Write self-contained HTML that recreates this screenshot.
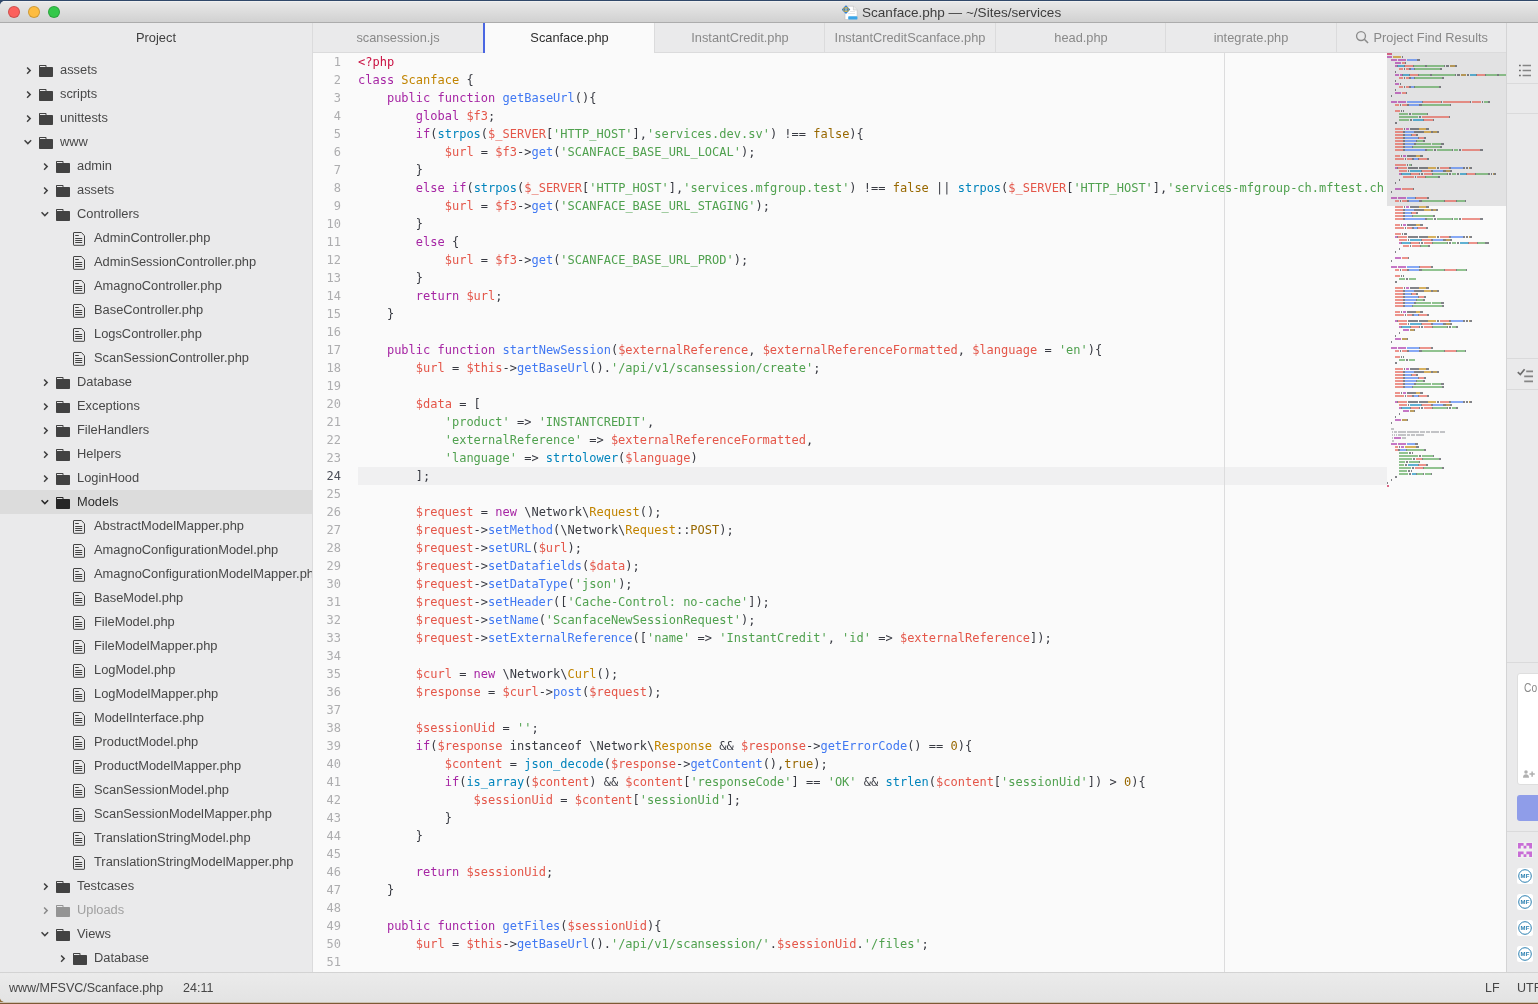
<!DOCTYPE html>
<html lang="en"><head><meta charset="utf-8"><title>Scanface.php — ~/Sites/services</title>
<style>
*{box-sizing:border-box}
html,body{margin:0;padding:0}
body{width:1538px;height:1004px;overflow:hidden;position:relative;background:linear-gradient(#30486a 0,#30486a 500px,#94703f 500px);font-family:"Liberation Sans",Arial,sans-serif;font-size:12.85px;color:#454545;-webkit-font-smoothing:antialiased}
.win{will-change:transform;position:absolute;left:0;top:1px;width:1580px;height:1001px;border-radius:5px;overflow:hidden;background:#eaeaeb}
.abs{position:absolute}
/* title bar */
.tb{left:0;top:0;width:100%;height:22px;background:linear-gradient(#f4f4f4 0,#e7e7e7 1.5px,#d1d1d1 100%);border-bottom:1px solid #acacac}
.tl{position:absolute;top:5px;width:12px;height:12px;border-radius:50%;border:.5px solid rgba(0,0,0,.18)}
.ttl{position:absolute;left:862px;top:1px;height:21px;line-height:22px;font-size:13.55px;color:#3d3d3d;white-space:nowrap;letter-spacing:0}
/* sidebar */
.side{left:0;top:22px;width:313px;height:949px;background:#eaeaeb;border-right:1px solid #dbdbdc;overflow:hidden}
.side .hd{position:absolute;left:0;top:0;width:312px;height:30px;line-height:30px;text-align:center;color:#3f3f3f}
.row{position:absolute;left:0;width:312px;height:24px}
.row.sel{background:#dcdcdc}
.row .nm{position:absolute;top:0;line-height:24px;white-space:nowrap;color:#484848}
.row.sel .nm{color:#2c2c2c}
.row svg{position:absolute;color:#424242}
.row.sel svg{color:#262626}
.row.ign .nm{color:#a0a0a0}.row.ign svg{color:#949494}
.row.ign .chev{color:#8a8a8a}
.chev{top:7px}.ico{top:6px;margin-left:1px}.fico{top:5px}
/* tabs */
.tabs{left:313px;top:22px;width:1193px;height:30px;background:#eaeaeb;border-bottom:1px solid #dbdbdc}
.tab{position:absolute;top:0;height:30px;line-height:30px;font-size:12.8px;text-align:center;color:#898989;border-left:1px solid #dbdbdc;white-space:nowrap;overflow:hidden}
.tab.act{background:#fafafa;color:#2f2f2f;height:30px;border-left:2px solid #4a66e2}
/* editor */
.ed{left:313px;top:52px;width:1193px;height:919px;background:#fafafa;overflow:hidden;font-family:"DejaVu Sans Mono","Liberation Mono",monospace;font-size:12px;line-height:18px;color:#383a42}
.gut{position:absolute;left:0;top:0;width:28px;text-align:right;color:#adadaf}
.ln.cur{color:#4b4e58}
.code{position:absolute;left:45px;top:0;width:1029px;overflow:hidden}
.cl{height:18px;width:1100px;white-space:pre}
.cl.cur{background:#f0f0f1}
.kw{color:#a626a4}.cls{color:#c18401}.fn{color:#4078f2}.bi{color:#0184bc}.var{color:#e45649}.str{color:#50a14f}.con{color:#986801}.tag{color:#ca1243}.com{color:#a0a1a7;font-style:italic}
.wrap{position:absolute;left:911px;top:0;width:1px;height:919px;background:#dcdcdd}
.mmwrap{position:absolute;left:1074px;top:0;width:119px;height:919px;background:#fafafa;overflow:hidden}
.mmvis{position:absolute;left:0;top:0;width:119px;height:153px;background:#e2e2e3}
.mm{position:absolute;left:0;top:-1px}
/* right dock */
.dock{left:1506px;top:22px;width:80px;height:949px;background:#eaeaeb;border-left:1px solid #d4d4d5}
.dv{position:absolute;left:0;width:80px;height:1px;background:#dadadb}
/* status */
.sb{left:0;top:971px;width:100%;height:30px;background:linear-gradient(#ebebeb,#e3e3e3);border-top:1px solid #d3d3d3;line-height:29px;color:#464646;font-size:12.5px}
.sb span{position:absolute;top:1px;white-space:nowrap}
</style></head>
<body>
<div class="abs" style="left:0;top:1002px;width:1538px;height:2px;background:linear-gradient(#cdc2b4 0,#cdc2b4 1px,#7d5a35 1px)"></div>
<div class="win">
 <div class="abs tb">
  <div class="tl" style="left:8px;background:#fc615d"></div>
  <div class="tl" style="left:28px;background:#fdbc40"></div>
  <div class="tl" style="left:48px;background:#34c84a"></div>
  <svg class="abs" style="left:842px;top:4px" width="16" height="15" viewBox="0 0 16 15"><path d="M3 1.2h8.4l3.8 3.8v9.6H3z" fill="#fff" stroke="#bdbdbd" stroke-width=".6"/><path d="M11.4 1.2V5h3.8" fill="#ececec" stroke="#b5b5b5" stroke-width=".5"/><path d="M8 6.5h5M6 8.5h7" stroke="#ddd" stroke-width=".7"/><rect x="6.2" y="11.2" width="9.2" height="3.3" rx=".7" fill="#3aa5e8"/><path d="M4 .3 8.3 4.6 4 8.9-.3 4.6z" fill="#2f7fd6"/><ellipse cx="4" cy="4.6" rx="2.6" ry="2.1" fill="none" stroke="#c9a43a" stroke-width="1"/><path d="M4 2.6v4" stroke="#e9d58a" stroke-width="1.1"/></svg>
  <div class="ttl">Scanface.php — ~/Sites/services</div>
 </div>
 <div class="abs side">
  <div class="hd">Project</div>
  <div class="abs" style="left:0;top:35px;width:312px">
<div class="row" style="top:0px"><svg class="chev" style="left:24px" width="10" height="10" viewBox="0 0 10 10"><path d="M3.1 2.5 6.2 5.6 3.1 8.7" fill="none" stroke="currentColor" stroke-width="1.5"/></svg><svg class="ico" style="left:38px" width="15" height="13" viewBox="0 0 15 13"><path d="M.8 1h5.9a.8.8 0 0 1 .8.8V3h5.7a.8.8 0 0 1 .8.8v8.4a.8.8 0 0 1-.8.8H.8a.8.8 0 0 1-.8-.8V1.8A.8.8 0 0 1 .8 1zM1 2v1h5.5V2z" fill="currentColor" fill-rule="evenodd"/></svg><span class="nm" style="left:60px">assets</span></div>
<div class="row" style="top:24px"><svg class="chev" style="left:24px" width="10" height="10" viewBox="0 0 10 10"><path d="M3.1 2.5 6.2 5.6 3.1 8.7" fill="none" stroke="currentColor" stroke-width="1.5"/></svg><svg class="ico" style="left:38px" width="15" height="13" viewBox="0 0 15 13"><path d="M.8 1h5.9a.8.8 0 0 1 .8.8V3h5.7a.8.8 0 0 1 .8.8v8.4a.8.8 0 0 1-.8.8H.8a.8.8 0 0 1-.8-.8V1.8A.8.8 0 0 1 .8 1zM1 2v1h5.5V2z" fill="currentColor" fill-rule="evenodd"/></svg><span class="nm" style="left:60px">scripts</span></div>
<div class="row" style="top:48px"><svg class="chev" style="left:24px" width="10" height="10" viewBox="0 0 10 10"><path d="M3.1 2.5 6.2 5.6 3.1 8.7" fill="none" stroke="currentColor" stroke-width="1.5"/></svg><svg class="ico" style="left:38px" width="15" height="13" viewBox="0 0 15 13"><path d="M.8 1h5.9a.8.8 0 0 1 .8.8V3h5.7a.8.8 0 0 1 .8.8v8.4a.8.8 0 0 1-.8.8H.8a.8.8 0 0 1-.8-.8V1.8A.8.8 0 0 1 .8 1zM1 2v1h5.5V2z" fill="currentColor" fill-rule="evenodd"/></svg><span class="nm" style="left:60px">unittests</span></div>
<div class="row" style="top:72px"><svg class="chev" style="left:24px" width="10" height="10" viewBox="0 0 10 10"><path d="M.55 3.3 3.85 6.6 7.15 3.3" fill="none" stroke="currentColor" stroke-width="1.5"/></svg><svg class="ico" style="left:38px" width="15" height="13" viewBox="0 0 15 13"><path d="M.8 1h5.9a.8.8 0 0 1 .8.8V3h5.7a.8.8 0 0 1 .8.8v8.4a.8.8 0 0 1-.8.8H.8a.8.8 0 0 1-.8-.8V1.8A.8.8 0 0 1 .8 1zM1 2v1h5.5V2z" fill="currentColor" fill-rule="evenodd"/></svg><span class="nm" style="left:60px">www</span></div>
<div class="row" style="top:96px"><svg class="chev" style="left:41px" width="10" height="10" viewBox="0 0 10 10"><path d="M3.1 2.5 6.2 5.6 3.1 8.7" fill="none" stroke="currentColor" stroke-width="1.5"/></svg><svg class="ico" style="left:55px" width="15" height="13" viewBox="0 0 15 13"><path d="M.8 1h5.9a.8.8 0 0 1 .8.8V3h5.7a.8.8 0 0 1 .8.8v8.4a.8.8 0 0 1-.8.8H.8a.8.8 0 0 1-.8-.8V1.8A.8.8 0 0 1 .8 1zM1 2v1h5.5V2z" fill="currentColor" fill-rule="evenodd"/></svg><span class="nm" style="left:77px">admin</span></div>
<div class="row" style="top:120px"><svg class="chev" style="left:41px" width="10" height="10" viewBox="0 0 10 10"><path d="M3.1 2.5 6.2 5.6 3.1 8.7" fill="none" stroke="currentColor" stroke-width="1.5"/></svg><svg class="ico" style="left:55px" width="15" height="13" viewBox="0 0 15 13"><path d="M.8 1h5.9a.8.8 0 0 1 .8.8V3h5.7a.8.8 0 0 1 .8.8v8.4a.8.8 0 0 1-.8.8H.8a.8.8 0 0 1-.8-.8V1.8A.8.8 0 0 1 .8 1zM1 2v1h5.5V2z" fill="currentColor" fill-rule="evenodd"/></svg><span class="nm" style="left:77px">assets</span></div>
<div class="row" style="top:144px"><svg class="chev" style="left:41px" width="10" height="10" viewBox="0 0 10 10"><path d="M.55 3.3 3.85 6.6 7.15 3.3" fill="none" stroke="currentColor" stroke-width="1.5"/></svg><svg class="ico" style="left:55px" width="15" height="13" viewBox="0 0 15 13"><path d="M.8 1h5.9a.8.8 0 0 1 .8.8V3h5.7a.8.8 0 0 1 .8.8v8.4a.8.8 0 0 1-.8.8H.8a.8.8 0 0 1-.8-.8V1.8A.8.8 0 0 1 .8 1zM1 2v1h5.5V2z" fill="currentColor" fill-rule="evenodd"/></svg><span class="nm" style="left:77px">Controllers</span></div>
<div class="row" style="top:168px"><svg class="fico" style="left:72px" width="14" height="16" viewBox="0 0 14 16"><path d="M2 1.5h7.3l3.2 3.2v9.1a.5.5 0 0 1-.5.5H2a.5.5 0 0 1-.5-.5V2a.5.5 0 0 1 .5-.5z" fill="none" stroke="currentColor" stroke-width="1"/><path d="M3.2 4.5h3.6M3.2 7.5h7M3.2 9.5h7M3.2 11.5h7" stroke="currentColor" stroke-width="1" fill="none"/></svg><span class="nm" style="left:94px">AdminController.php</span></div>
<div class="row" style="top:192px"><svg class="fico" style="left:72px" width="14" height="16" viewBox="0 0 14 16"><path d="M2 1.5h7.3l3.2 3.2v9.1a.5.5 0 0 1-.5.5H2a.5.5 0 0 1-.5-.5V2a.5.5 0 0 1 .5-.5z" fill="none" stroke="currentColor" stroke-width="1"/><path d="M3.2 4.5h3.6M3.2 7.5h7M3.2 9.5h7M3.2 11.5h7" stroke="currentColor" stroke-width="1" fill="none"/></svg><span class="nm" style="left:94px">AdminSessionController.php</span></div>
<div class="row" style="top:216px"><svg class="fico" style="left:72px" width="14" height="16" viewBox="0 0 14 16"><path d="M2 1.5h7.3l3.2 3.2v9.1a.5.5 0 0 1-.5.5H2a.5.5 0 0 1-.5-.5V2a.5.5 0 0 1 .5-.5z" fill="none" stroke="currentColor" stroke-width="1"/><path d="M3.2 4.5h3.6M3.2 7.5h7M3.2 9.5h7M3.2 11.5h7" stroke="currentColor" stroke-width="1" fill="none"/></svg><span class="nm" style="left:94px">AmagnoController.php</span></div>
<div class="row" style="top:240px"><svg class="fico" style="left:72px" width="14" height="16" viewBox="0 0 14 16"><path d="M2 1.5h7.3l3.2 3.2v9.1a.5.5 0 0 1-.5.5H2a.5.5 0 0 1-.5-.5V2a.5.5 0 0 1 .5-.5z" fill="none" stroke="currentColor" stroke-width="1"/><path d="M3.2 4.5h3.6M3.2 7.5h7M3.2 9.5h7M3.2 11.5h7" stroke="currentColor" stroke-width="1" fill="none"/></svg><span class="nm" style="left:94px">BaseController.php</span></div>
<div class="row" style="top:264px"><svg class="fico" style="left:72px" width="14" height="16" viewBox="0 0 14 16"><path d="M2 1.5h7.3l3.2 3.2v9.1a.5.5 0 0 1-.5.5H2a.5.5 0 0 1-.5-.5V2a.5.5 0 0 1 .5-.5z" fill="none" stroke="currentColor" stroke-width="1"/><path d="M3.2 4.5h3.6M3.2 7.5h7M3.2 9.5h7M3.2 11.5h7" stroke="currentColor" stroke-width="1" fill="none"/></svg><span class="nm" style="left:94px">LogsController.php</span></div>
<div class="row" style="top:288px"><svg class="fico" style="left:72px" width="14" height="16" viewBox="0 0 14 16"><path d="M2 1.5h7.3l3.2 3.2v9.1a.5.5 0 0 1-.5.5H2a.5.5 0 0 1-.5-.5V2a.5.5 0 0 1 .5-.5z" fill="none" stroke="currentColor" stroke-width="1"/><path d="M3.2 4.5h3.6M3.2 7.5h7M3.2 9.5h7M3.2 11.5h7" stroke="currentColor" stroke-width="1" fill="none"/></svg><span class="nm" style="left:94px">ScanSessionController.php</span></div>
<div class="row" style="top:312px"><svg class="chev" style="left:41px" width="10" height="10" viewBox="0 0 10 10"><path d="M3.1 2.5 6.2 5.6 3.1 8.7" fill="none" stroke="currentColor" stroke-width="1.5"/></svg><svg class="ico" style="left:55px" width="15" height="13" viewBox="0 0 15 13"><path d="M.8 1h5.9a.8.8 0 0 1 .8.8V3h5.7a.8.8 0 0 1 .8.8v8.4a.8.8 0 0 1-.8.8H.8a.8.8 0 0 1-.8-.8V1.8A.8.8 0 0 1 .8 1zM1 2v1h5.5V2z" fill="currentColor" fill-rule="evenodd"/></svg><span class="nm" style="left:77px">Database</span></div>
<div class="row" style="top:336px"><svg class="chev" style="left:41px" width="10" height="10" viewBox="0 0 10 10"><path d="M3.1 2.5 6.2 5.6 3.1 8.7" fill="none" stroke="currentColor" stroke-width="1.5"/></svg><svg class="ico" style="left:55px" width="15" height="13" viewBox="0 0 15 13"><path d="M.8 1h5.9a.8.8 0 0 1 .8.8V3h5.7a.8.8 0 0 1 .8.8v8.4a.8.8 0 0 1-.8.8H.8a.8.8 0 0 1-.8-.8V1.8A.8.8 0 0 1 .8 1zM1 2v1h5.5V2z" fill="currentColor" fill-rule="evenodd"/></svg><span class="nm" style="left:77px">Exceptions</span></div>
<div class="row" style="top:360px"><svg class="chev" style="left:41px" width="10" height="10" viewBox="0 0 10 10"><path d="M3.1 2.5 6.2 5.6 3.1 8.7" fill="none" stroke="currentColor" stroke-width="1.5"/></svg><svg class="ico" style="left:55px" width="15" height="13" viewBox="0 0 15 13"><path d="M.8 1h5.9a.8.8 0 0 1 .8.8V3h5.7a.8.8 0 0 1 .8.8v8.4a.8.8 0 0 1-.8.8H.8a.8.8 0 0 1-.8-.8V1.8A.8.8 0 0 1 .8 1zM1 2v1h5.5V2z" fill="currentColor" fill-rule="evenodd"/></svg><span class="nm" style="left:77px">FileHandlers</span></div>
<div class="row" style="top:384px"><svg class="chev" style="left:41px" width="10" height="10" viewBox="0 0 10 10"><path d="M3.1 2.5 6.2 5.6 3.1 8.7" fill="none" stroke="currentColor" stroke-width="1.5"/></svg><svg class="ico" style="left:55px" width="15" height="13" viewBox="0 0 15 13"><path d="M.8 1h5.9a.8.8 0 0 1 .8.8V3h5.7a.8.8 0 0 1 .8.8v8.4a.8.8 0 0 1-.8.8H.8a.8.8 0 0 1-.8-.8V1.8A.8.8 0 0 1 .8 1zM1 2v1h5.5V2z" fill="currentColor" fill-rule="evenodd"/></svg><span class="nm" style="left:77px">Helpers</span></div>
<div class="row" style="top:408px"><svg class="chev" style="left:41px" width="10" height="10" viewBox="0 0 10 10"><path d="M3.1 2.5 6.2 5.6 3.1 8.7" fill="none" stroke="currentColor" stroke-width="1.5"/></svg><svg class="ico" style="left:55px" width="15" height="13" viewBox="0 0 15 13"><path d="M.8 1h5.9a.8.8 0 0 1 .8.8V3h5.7a.8.8 0 0 1 .8.8v8.4a.8.8 0 0 1-.8.8H.8a.8.8 0 0 1-.8-.8V1.8A.8.8 0 0 1 .8 1zM1 2v1h5.5V2z" fill="currentColor" fill-rule="evenodd"/></svg><span class="nm" style="left:77px">LoginHood</span></div>
<div class="row sel" style="top:432px"><svg class="chev" style="left:41px" width="10" height="10" viewBox="0 0 10 10"><path d="M.55 3.3 3.85 6.6 7.15 3.3" fill="none" stroke="currentColor" stroke-width="1.5"/></svg><svg class="ico" style="left:55px" width="15" height="13" viewBox="0 0 15 13"><path d="M.8 1h5.9a.8.8 0 0 1 .8.8V3h5.7a.8.8 0 0 1 .8.8v8.4a.8.8 0 0 1-.8.8H.8a.8.8 0 0 1-.8-.8V1.8A.8.8 0 0 1 .8 1zM1 2v1h5.5V2z" fill="currentColor" fill-rule="evenodd"/></svg><span class="nm" style="left:77px">Models</span></div>
<div class="row" style="top:456px"><svg class="fico" style="left:72px" width="14" height="16" viewBox="0 0 14 16"><path d="M2 1.5h7.3l3.2 3.2v9.1a.5.5 0 0 1-.5.5H2a.5.5 0 0 1-.5-.5V2a.5.5 0 0 1 .5-.5z" fill="none" stroke="currentColor" stroke-width="1"/><path d="M3.2 4.5h3.6M3.2 7.5h7M3.2 9.5h7M3.2 11.5h7" stroke="currentColor" stroke-width="1" fill="none"/></svg><span class="nm" style="left:94px">AbstractModelMapper.php</span></div>
<div class="row" style="top:480px"><svg class="fico" style="left:72px" width="14" height="16" viewBox="0 0 14 16"><path d="M2 1.5h7.3l3.2 3.2v9.1a.5.5 0 0 1-.5.5H2a.5.5 0 0 1-.5-.5V2a.5.5 0 0 1 .5-.5z" fill="none" stroke="currentColor" stroke-width="1"/><path d="M3.2 4.5h3.6M3.2 7.5h7M3.2 9.5h7M3.2 11.5h7" stroke="currentColor" stroke-width="1" fill="none"/></svg><span class="nm" style="left:94px">AmagnoConfigurationModel.php</span></div>
<div class="row" style="top:504px"><svg class="fico" style="left:72px" width="14" height="16" viewBox="0 0 14 16"><path d="M2 1.5h7.3l3.2 3.2v9.1a.5.5 0 0 1-.5.5H2a.5.5 0 0 1-.5-.5V2a.5.5 0 0 1 .5-.5z" fill="none" stroke="currentColor" stroke-width="1"/><path d="M3.2 4.5h3.6M3.2 7.5h7M3.2 9.5h7M3.2 11.5h7" stroke="currentColor" stroke-width="1" fill="none"/></svg><span class="nm" style="left:94px">AmagnoConfigurationModelMapper.php</span></div>
<div class="row" style="top:528px"><svg class="fico" style="left:72px" width="14" height="16" viewBox="0 0 14 16"><path d="M2 1.5h7.3l3.2 3.2v9.1a.5.5 0 0 1-.5.5H2a.5.5 0 0 1-.5-.5V2a.5.5 0 0 1 .5-.5z" fill="none" stroke="currentColor" stroke-width="1"/><path d="M3.2 4.5h3.6M3.2 7.5h7M3.2 9.5h7M3.2 11.5h7" stroke="currentColor" stroke-width="1" fill="none"/></svg><span class="nm" style="left:94px">BaseModel.php</span></div>
<div class="row" style="top:552px"><svg class="fico" style="left:72px" width="14" height="16" viewBox="0 0 14 16"><path d="M2 1.5h7.3l3.2 3.2v9.1a.5.5 0 0 1-.5.5H2a.5.5 0 0 1-.5-.5V2a.5.5 0 0 1 .5-.5z" fill="none" stroke="currentColor" stroke-width="1"/><path d="M3.2 4.5h3.6M3.2 7.5h7M3.2 9.5h7M3.2 11.5h7" stroke="currentColor" stroke-width="1" fill="none"/></svg><span class="nm" style="left:94px">FileModel.php</span></div>
<div class="row" style="top:576px"><svg class="fico" style="left:72px" width="14" height="16" viewBox="0 0 14 16"><path d="M2 1.5h7.3l3.2 3.2v9.1a.5.5 0 0 1-.5.5H2a.5.5 0 0 1-.5-.5V2a.5.5 0 0 1 .5-.5z" fill="none" stroke="currentColor" stroke-width="1"/><path d="M3.2 4.5h3.6M3.2 7.5h7M3.2 9.5h7M3.2 11.5h7" stroke="currentColor" stroke-width="1" fill="none"/></svg><span class="nm" style="left:94px">FileModelMapper.php</span></div>
<div class="row" style="top:600px"><svg class="fico" style="left:72px" width="14" height="16" viewBox="0 0 14 16"><path d="M2 1.5h7.3l3.2 3.2v9.1a.5.5 0 0 1-.5.5H2a.5.5 0 0 1-.5-.5V2a.5.5 0 0 1 .5-.5z" fill="none" stroke="currentColor" stroke-width="1"/><path d="M3.2 4.5h3.6M3.2 7.5h7M3.2 9.5h7M3.2 11.5h7" stroke="currentColor" stroke-width="1" fill="none"/></svg><span class="nm" style="left:94px">LogModel.php</span></div>
<div class="row" style="top:624px"><svg class="fico" style="left:72px" width="14" height="16" viewBox="0 0 14 16"><path d="M2 1.5h7.3l3.2 3.2v9.1a.5.5 0 0 1-.5.5H2a.5.5 0 0 1-.5-.5V2a.5.5 0 0 1 .5-.5z" fill="none" stroke="currentColor" stroke-width="1"/><path d="M3.2 4.5h3.6M3.2 7.5h7M3.2 9.5h7M3.2 11.5h7" stroke="currentColor" stroke-width="1" fill="none"/></svg><span class="nm" style="left:94px">LogModelMapper.php</span></div>
<div class="row" style="top:648px"><svg class="fico" style="left:72px" width="14" height="16" viewBox="0 0 14 16"><path d="M2 1.5h7.3l3.2 3.2v9.1a.5.5 0 0 1-.5.5H2a.5.5 0 0 1-.5-.5V2a.5.5 0 0 1 .5-.5z" fill="none" stroke="currentColor" stroke-width="1"/><path d="M3.2 4.5h3.6M3.2 7.5h7M3.2 9.5h7M3.2 11.5h7" stroke="currentColor" stroke-width="1" fill="none"/></svg><span class="nm" style="left:94px">ModelInterface.php</span></div>
<div class="row" style="top:672px"><svg class="fico" style="left:72px" width="14" height="16" viewBox="0 0 14 16"><path d="M2 1.5h7.3l3.2 3.2v9.1a.5.5 0 0 1-.5.5H2a.5.5 0 0 1-.5-.5V2a.5.5 0 0 1 .5-.5z" fill="none" stroke="currentColor" stroke-width="1"/><path d="M3.2 4.5h3.6M3.2 7.5h7M3.2 9.5h7M3.2 11.5h7" stroke="currentColor" stroke-width="1" fill="none"/></svg><span class="nm" style="left:94px">ProductModel.php</span></div>
<div class="row" style="top:696px"><svg class="fico" style="left:72px" width="14" height="16" viewBox="0 0 14 16"><path d="M2 1.5h7.3l3.2 3.2v9.1a.5.5 0 0 1-.5.5H2a.5.5 0 0 1-.5-.5V2a.5.5 0 0 1 .5-.5z" fill="none" stroke="currentColor" stroke-width="1"/><path d="M3.2 4.5h3.6M3.2 7.5h7M3.2 9.5h7M3.2 11.5h7" stroke="currentColor" stroke-width="1" fill="none"/></svg><span class="nm" style="left:94px">ProductModelMapper.php</span></div>
<div class="row" style="top:720px"><svg class="fico" style="left:72px" width="14" height="16" viewBox="0 0 14 16"><path d="M2 1.5h7.3l3.2 3.2v9.1a.5.5 0 0 1-.5.5H2a.5.5 0 0 1-.5-.5V2a.5.5 0 0 1 .5-.5z" fill="none" stroke="currentColor" stroke-width="1"/><path d="M3.2 4.5h3.6M3.2 7.5h7M3.2 9.5h7M3.2 11.5h7" stroke="currentColor" stroke-width="1" fill="none"/></svg><span class="nm" style="left:94px">ScanSessionModel.php</span></div>
<div class="row" style="top:744px"><svg class="fico" style="left:72px" width="14" height="16" viewBox="0 0 14 16"><path d="M2 1.5h7.3l3.2 3.2v9.1a.5.5 0 0 1-.5.5H2a.5.5 0 0 1-.5-.5V2a.5.5 0 0 1 .5-.5z" fill="none" stroke="currentColor" stroke-width="1"/><path d="M3.2 4.5h3.6M3.2 7.5h7M3.2 9.5h7M3.2 11.5h7" stroke="currentColor" stroke-width="1" fill="none"/></svg><span class="nm" style="left:94px">ScanSessionModelMapper.php</span></div>
<div class="row" style="top:768px"><svg class="fico" style="left:72px" width="14" height="16" viewBox="0 0 14 16"><path d="M2 1.5h7.3l3.2 3.2v9.1a.5.5 0 0 1-.5.5H2a.5.5 0 0 1-.5-.5V2a.5.5 0 0 1 .5-.5z" fill="none" stroke="currentColor" stroke-width="1"/><path d="M3.2 4.5h3.6M3.2 7.5h7M3.2 9.5h7M3.2 11.5h7" stroke="currentColor" stroke-width="1" fill="none"/></svg><span class="nm" style="left:94px">TranslationStringModel.php</span></div>
<div class="row" style="top:792px"><svg class="fico" style="left:72px" width="14" height="16" viewBox="0 0 14 16"><path d="M2 1.5h7.3l3.2 3.2v9.1a.5.5 0 0 1-.5.5H2a.5.5 0 0 1-.5-.5V2a.5.5 0 0 1 .5-.5z" fill="none" stroke="currentColor" stroke-width="1"/><path d="M3.2 4.5h3.6M3.2 7.5h7M3.2 9.5h7M3.2 11.5h7" stroke="currentColor" stroke-width="1" fill="none"/></svg><span class="nm" style="left:94px">TranslationStringModelMapper.php</span></div>
<div class="row" style="top:816px"><svg class="chev" style="left:41px" width="10" height="10" viewBox="0 0 10 10"><path d="M3.1 2.5 6.2 5.6 3.1 8.7" fill="none" stroke="currentColor" stroke-width="1.5"/></svg><svg class="ico" style="left:55px" width="15" height="13" viewBox="0 0 15 13"><path d="M.8 1h5.9a.8.8 0 0 1 .8.8V3h5.7a.8.8 0 0 1 .8.8v8.4a.8.8 0 0 1-.8.8H.8a.8.8 0 0 1-.8-.8V1.8A.8.8 0 0 1 .8 1zM1 2v1h5.5V2z" fill="currentColor" fill-rule="evenodd"/></svg><span class="nm" style="left:77px">Testcases</span></div>
<div class="row ign" style="top:840px"><svg class="chev" style="left:41px" width="10" height="10" viewBox="0 0 10 10"><path d="M3.1 2.5 6.2 5.6 3.1 8.7" fill="none" stroke="currentColor" stroke-width="1.5"/></svg><svg class="ico" style="left:55px" width="15" height="13" viewBox="0 0 15 13"><path d="M.8 1h5.9a.8.8 0 0 1 .8.8V3h5.7a.8.8 0 0 1 .8.8v8.4a.8.8 0 0 1-.8.8H.8a.8.8 0 0 1-.8-.8V1.8A.8.8 0 0 1 .8 1zM1 2v1h5.5V2z" fill="currentColor" fill-rule="evenodd"/></svg><span class="nm" style="left:77px">Uploads</span></div>
<div class="row" style="top:864px"><svg class="chev" style="left:41px" width="10" height="10" viewBox="0 0 10 10"><path d="M.55 3.3 3.85 6.6 7.15 3.3" fill="none" stroke="currentColor" stroke-width="1.5"/></svg><svg class="ico" style="left:55px" width="15" height="13" viewBox="0 0 15 13"><path d="M.8 1h5.9a.8.8 0 0 1 .8.8V3h5.7a.8.8 0 0 1 .8.8v8.4a.8.8 0 0 1-.8.8H.8a.8.8 0 0 1-.8-.8V1.8A.8.8 0 0 1 .8 1zM1 2v1h5.5V2z" fill="currentColor" fill-rule="evenodd"/></svg><span class="nm" style="left:77px">Views</span></div>
<div class="row" style="top:888px"><svg class="chev" style="left:58px" width="10" height="10" viewBox="0 0 10 10"><path d="M3.1 2.5 6.2 5.6 3.1 8.7" fill="none" stroke="currentColor" stroke-width="1.5"/></svg><svg class="ico" style="left:72px" width="15" height="13" viewBox="0 0 15 13"><path d="M.8 1h5.9a.8.8 0 0 1 .8.8V3h5.7a.8.8 0 0 1 .8.8v8.4a.8.8 0 0 1-.8.8H.8a.8.8 0 0 1-.8-.8V1.8A.8.8 0 0 1 .8 1zM1 2v1h5.5V2z" fill="currentColor" fill-rule="evenodd"/></svg><span class="nm" style="left:94px">Database</span></div>
  </div>
 </div>
 <div class="abs tabs">
  <div class="tab" style="left:0;width:170px;border-left:0">scansession.js</div>
  <div class="tab act" style="left:170px;width:171px">Scanface.php</div>
  <div class="tab" style="left:341px;width:171px">InstantCredit.php</div>
  <div class="tab" style="left:511px;width:171px">InstantCreditScanface.php</div>
  <div class="tab" style="left:682px;width:171px">head.php</div>
  <div class="tab" style="left:852px;width:171px">integrate.php</div>
  <div class="tab" style="left:1023px;width:170px"><svg width="14.5" height="14.5" viewBox="0 0 14 14" style="vertical-align:-2.5px;margin-right:4px"><circle cx="5.8" cy="5.8" r="4.3" fill="none" stroke="#8c8c8c" stroke-width="1.3"/><path d="M9 9l3.6 3.6" stroke="#8c8c8c" stroke-width="1.5"/></svg>Project Find Results</div>
 </div>
 <div class="abs ed">
  <div class="gut">
<div class="ln">1</div>
<div class="ln">2</div>
<div class="ln">3</div>
<div class="ln">4</div>
<div class="ln">5</div>
<div class="ln">6</div>
<div class="ln">7</div>
<div class="ln">8</div>
<div class="ln">9</div>
<div class="ln">10</div>
<div class="ln">11</div>
<div class="ln">12</div>
<div class="ln">13</div>
<div class="ln">14</div>
<div class="ln">15</div>
<div class="ln">16</div>
<div class="ln">17</div>
<div class="ln">18</div>
<div class="ln">19</div>
<div class="ln">20</div>
<div class="ln">21</div>
<div class="ln">22</div>
<div class="ln">23</div>
<div class="ln cur">24</div>
<div class="ln">25</div>
<div class="ln">26</div>
<div class="ln">27</div>
<div class="ln">28</div>
<div class="ln">29</div>
<div class="ln">30</div>
<div class="ln">31</div>
<div class="ln">32</div>
<div class="ln">33</div>
<div class="ln">34</div>
<div class="ln">35</div>
<div class="ln">36</div>
<div class="ln">37</div>
<div class="ln">38</div>
<div class="ln">39</div>
<div class="ln">40</div>
<div class="ln">41</div>
<div class="ln">42</div>
<div class="ln">43</div>
<div class="ln">44</div>
<div class="ln">45</div>
<div class="ln">46</div>
<div class="ln">47</div>
<div class="ln">48</div>
<div class="ln">49</div>
<div class="ln">50</div>
<div class="ln">51</div>
  </div>
  <div class="code">
<div class="cl"><span class="tag">&lt;?php</span></div>
<div class="cl"><span class="kw">class</span> <span class="cls">Scanface</span> {</div>
<div class="cl">    <span class="kw">public</span> <span class="kw">function</span> <span class="fn">getBaseUrl</span>(){</div>
<div class="cl">        <span class="kw">global</span> <span class="var">$f3</span>;</div>
<div class="cl">        <span class="kw">if</span>(<span class="bi">strpos</span>(<span class="var">$_SERVER</span>[<span class="str">'HTTP_HOST'</span>],<span class="str">'services.dev.sv'</span>) !== <span class="con">false</span>){</div>
<div class="cl">            <span class="var">$url</span> = <span class="var">$f3</span>-&gt;<span class="fn">get</span>(<span class="str">'SCANFACE_BASE_URL_LOCAL'</span>);</div>
<div class="cl">        }</div>
<div class="cl">        <span class="kw">else</span> <span class="kw">if</span>(<span class="bi">strpos</span>(<span class="var">$_SERVER</span>[<span class="str">'HTTP_HOST'</span>],<span class="str">'services.mfgroup.test'</span>) !== <span class="con">false</span> || <span class="bi">strpos</span>(<span class="var">$_SERVER</span>[<span class="str">'HTTP_HOST'</span>],<span class="str">'services-mfgroup-ch.mftest.ch'</span>) !== <span class="con">false</span>){</div>
<div class="cl">            <span class="var">$url</span> = <span class="var">$f3</span>-&gt;<span class="fn">get</span>(<span class="str">'SCANFACE_BASE_URL_STAGING'</span>);</div>
<div class="cl">        }</div>
<div class="cl">        <span class="kw">else</span> {</div>
<div class="cl">            <span class="var">$url</span> = <span class="var">$f3</span>-&gt;<span class="fn">get</span>(<span class="str">'SCANFACE_BASE_URL_PROD'</span>);</div>
<div class="cl">        }</div>
<div class="cl">        <span class="kw">return</span> <span class="var">$url</span>;</div>
<div class="cl">    }</div>
<div class="cl">&nbsp;</div>
<div class="cl">    <span class="kw">public</span> <span class="kw">function</span> <span class="fn">startNewSession</span>(<span class="var">$externalReference</span>, <span class="var">$externalReferenceFormatted</span>, <span class="var">$language</span> = <span class="str">'en'</span>){</div>
<div class="cl">        <span class="var">$url</span> = <span class="var">$this</span>-&gt;<span class="fn">getBaseUrl</span>().<span class="str">'/api/v1/scansession/create'</span>;</div>
<div class="cl">&nbsp;</div>
<div class="cl">        <span class="var">$data</span> = [</div>
<div class="cl">            <span class="str">'product'</span> =&gt; <span class="str">'INSTANTCREDIT'</span>,</div>
<div class="cl">            <span class="str">'externalReference'</span> =&gt; <span class="var">$externalReferenceFormatted</span>,</div>
<div class="cl">            <span class="str">'language'</span> =&gt; <span class="bi">strtolower</span>(<span class="var">$language</span>)</div>
<div class="cl cur">        ];</div>
<div class="cl">&nbsp;</div>
<div class="cl">        <span class="var">$request</span> = <span class="kw">new</span> \Network\<span class="cls">Request</span>();</div>
<div class="cl">        <span class="var">$request</span>-&gt;<span class="fn">setMethod</span>(\Network\<span class="cls">Request</span>::<span class="con">POST</span>);</div>
<div class="cl">        <span class="var">$request</span>-&gt;<span class="fn">setURL</span>(<span class="var">$url</span>);</div>
<div class="cl">        <span class="var">$request</span>-&gt;<span class="fn">setDatafields</span>(<span class="var">$data</span>);</div>
<div class="cl">        <span class="var">$request</span>-&gt;<span class="fn">setDataType</span>(<span class="str">'json'</span>);</div>
<div class="cl">        <span class="var">$request</span>-&gt;<span class="fn">setHeader</span>([<span class="str">'Cache-Control: no-cache'</span>]);</div>
<div class="cl">        <span class="var">$request</span>-&gt;<span class="fn">setName</span>(<span class="str">'ScanfaceNewSessionRequest'</span>);</div>
<div class="cl">        <span class="var">$request</span>-&gt;<span class="fn">setExternalReference</span>([<span class="str">'name'</span> =&gt; <span class="str">'InstantCredit'</span>, <span class="str">'id'</span> =&gt; <span class="var">$externalReference</span>]);</div>
<div class="cl">&nbsp;</div>
<div class="cl">        <span class="var">$curl</span> = <span class="kw">new</span> \Network\<span class="cls">Curl</span>();</div>
<div class="cl">        <span class="var">$response</span> = <span class="var">$curl</span>-&gt;<span class="fn">post</span>(<span class="var">$request</span>);</div>
<div class="cl">&nbsp;</div>
<div class="cl">        <span class="var">$sessionUid</span> = <span class="str">''</span>;</div>
<div class="cl">        <span class="kw">if</span>(<span class="var">$response</span> instanceof \Network\<span class="cls">Response</span> &amp;&amp; <span class="var">$response</span>-&gt;<span class="fn">getErrorCode</span>() == <span class="con">0</span>){</div>
<div class="cl">            <span class="var">$content</span> = <span class="bi">json_decode</span>(<span class="var">$response</span>-&gt;<span class="fn">getContent</span>(),<span class="con">true</span>);</div>
<div class="cl">            <span class="kw">if</span>(<span class="bi">is_array</span>(<span class="var">$content</span>) &amp;&amp; <span class="var">$content</span>[<span class="str">'responseCode'</span>] == <span class="str">'OK'</span> &amp;&amp; <span class="bi">strlen</span>(<span class="var">$content</span>[<span class="str">'sessionUid'</span>]) &gt; <span class="con">0</span>){</div>
<div class="cl">                <span class="var">$sessionUid</span> = <span class="var">$content</span>[<span class="str">'sessionUid'</span>];</div>
<div class="cl">            }</div>
<div class="cl">        }</div>
<div class="cl">&nbsp;</div>
<div class="cl">        <span class="kw">return</span> <span class="var">$sessionUid</span>;</div>
<div class="cl">    }</div>
<div class="cl">&nbsp;</div>
<div class="cl">    <span class="kw">public</span> <span class="kw">function</span> <span class="fn">getFiles</span>(<span class="var">$sessionUid</span>){</div>
<div class="cl">        <span class="var">$url</span> = <span class="var">$this</span>-&gt;<span class="fn">getBaseUrl</span>().<span class="str">'/api/v1/scansession/'</span>.<span class="var">$sessionUid</span>.<span class="str">'/files'</span>;</div>
<div class="cl">&nbsp;</div>
  </div>
  <div class="wrap"></div>
  <div class="mmwrap"><div class="mmvis"></div>
<svg class="mm" width="120" height="440" viewBox="0 0 120 440" shape-rendering="crispEdges">
<path stroke="#ca1243" stroke-opacity=".62" stroke-width="2" fill="none" d="M0 1.5h5M0 433.5h2"/>
<path stroke="#a626a4" stroke-opacity=".62" stroke-width="2" fill="none" d="M0 4.5h5M4 7.5h6M11 7.5h8M8 10.5h6M8 13.5h2M8 22.5h4M13 22.5h2M8 31.5h4M8 40.5h6M4 49.5h6M11 49.5h8M19 76.5h3M16 103.5h3M8 115.5h2M12 121.5h2M8 136.5h6M4 145.5h6M11 145.5h8M19 154.5h3M16 172.5h3M8 184.5h2M12 190.5h2M8 205.5h6M4 214.5h6M11 214.5h8M19 235.5h3M16 259.5h3M8 268.5h2M12 274.5h2M16 277.5h6M8 286.5h6M4 295.5h6M11 295.5h8M19 316.5h3M16 340.5h3M8 349.5h2M12 355.5h2M16 358.5h6M8 367.5h6M7 385.5h7M4 391.5h6M11 391.5h8M14 394.5h3"/>
<path stroke="#c18401" stroke-opacity=".62" stroke-width="2" fill="none" d="M6 4.5h8M32 76.5h7M37 79.5h7M29 103.5h4M41 115.5h8M32 154.5h7M37 157.5h7M29 172.5h4M41 184.5h8M32 235.5h7M37 238.5h7M29 259.5h4M41 268.5h8M32 316.5h7M37 319.5h7M29 340.5h4M41 349.5h8M18 394.5h11"/>
<path stroke="#383a42" stroke-opacity=".62" stroke-width="2" fill="none" d="M15 4.5h1M30 7.5h3M18 10.5h1M10 13.5h1M17 13.5h1M26 13.5h1M38 13.5h2M57 13.5h1M59 13.5h3M68 13.5h2M17 16.5h1M22 16.5h2M27 16.5h1M53 16.5h2M8 19.5h1M15 22.5h1M22 22.5h1M31 22.5h1M43 22.5h2M68 22.5h1M70 22.5h3M80 22.5h2M89 22.5h1M98 22.5h1M110 22.5h2M143 22.5h1M145 22.5h3M154 22.5h2M17 25.5h1M22 25.5h2M27 25.5h1M55 25.5h2M8 28.5h1M13 31.5h1M17 34.5h1M22 34.5h2M27 34.5h1M52 34.5h2M8 37.5h1M19 40.5h1M4 43.5h1M35 49.5h1M54 49.5h1M83 49.5h1M95 49.5h1M101 49.5h2M13 52.5h1M20 52.5h2M32 52.5h3M63 52.5h1M14 58.5h1M16 58.5h1M22 61.5h2M40 61.5h1M32 64.5h2M62 64.5h1M23 67.5h2M36 67.5h1M46 67.5h1M8 70.5h2M17 76.5h1M23 76.5h9M39 76.5h3M16 79.5h2M27 79.5h10M44 79.5h2M50 79.5h2M16 82.5h2M24 82.5h1M29 82.5h2M16 85.5h2M31 85.5h1M37 85.5h2M16 88.5h2M29 88.5h1M36 88.5h2M16 91.5h2M27 91.5h2M54 91.5h3M16 94.5h2M25 94.5h1M53 94.5h2M16 97.5h2M38 97.5h2M47 97.5h2M65 97.5h1M72 97.5h2M93 97.5h3M14 103.5h1M20 103.5h9M33 103.5h3M18 106.5h1M25 106.5h2M31 106.5h1M40 106.5h2M20 112.5h1M24 112.5h1M10 115.5h1M21 115.5h10M32 115.5h9M50 115.5h2M62 115.5h2M76 115.5h2M79 115.5h2M83 115.5h2M21 118.5h1M34 118.5h1M44 118.5h2M56 118.5h3M63 118.5h2M14 121.5h1M23 121.5h1M32 121.5h1M34 121.5h2M45 121.5h1M60 121.5h1M62 121.5h2M70 121.5h2M79 121.5h1M88 121.5h1M101 121.5h2M104 121.5h1M107 121.5h2M28 124.5h1M38 124.5h1M51 124.5h2M12 127.5h1M8 130.5h1M26 136.5h1M4 139.5h1M28 145.5h1M40 145.5h2M13 148.5h1M20 148.5h2M32 148.5h3M57 148.5h1M69 148.5h1M78 148.5h1M17 154.5h1M23 154.5h9M39 154.5h3M16 157.5h2M27 157.5h10M44 157.5h2M49 157.5h2M16 160.5h2M24 160.5h1M29 160.5h2M16 163.5h2M25 163.5h1M46 163.5h2M16 166.5h2M38 166.5h2M47 166.5h2M65 166.5h1M72 166.5h2M93 166.5h3M14 172.5h1M20 172.5h9M33 172.5h3M18 175.5h1M25 175.5h2M30 175.5h1M39 175.5h2M15 181.5h1M17 181.5h3M10 184.5h1M21 184.5h10M32 184.5h9M50 184.5h2M62 184.5h2M76 184.5h2M79 184.5h2M83 184.5h2M21 187.5h1M34 187.5h1M44 187.5h2M56 187.5h3M63 187.5h2M14 190.5h1M23 190.5h1M32 190.5h1M34 190.5h2M45 190.5h1M60 190.5h1M62 190.5h2M70 190.5h2M81 190.5h1M90 190.5h1M98 190.5h4M23 193.5h1M33 193.5h1M41 193.5h2M12 196.5h1M8 199.5h1M21 205.5h1M4 208.5h1M32 214.5h1M44 214.5h2M13 217.5h1M20 217.5h2M32 217.5h3M57 217.5h1M69 217.5h1M79 217.5h1M14 223.5h1M16 223.5h1M19 226.5h2M8 229.5h2M17 235.5h1M23 235.5h9M39 235.5h3M16 238.5h2M27 238.5h10M44 238.5h2M50 238.5h2M16 241.5h2M24 241.5h1M29 241.5h2M16 244.5h2M31 244.5h1M37 244.5h2M16 247.5h2M29 247.5h1M36 247.5h2M16 250.5h2M27 250.5h2M54 250.5h3M16 253.5h2M25 253.5h1M55 253.5h2M14 259.5h1M20 259.5h9M33 259.5h3M18 262.5h1M25 262.5h2M31 262.5h1M40 262.5h2M10 268.5h1M21 268.5h10M32 268.5h9M50 268.5h2M62 268.5h2M76 268.5h2M79 268.5h2M83 268.5h2M21 271.5h1M34 271.5h1M44 271.5h2M56 271.5h3M63 271.5h2M14 274.5h1M23 274.5h1M32 274.5h1M34 274.5h2M45 274.5h1M60 274.5h1M62 274.5h2M69 274.5h2M27 277.5h1M12 280.5h1M8 283.5h1M20 286.5h1M4 289.5h1M32 295.5h1M44 295.5h2M13 298.5h1M20 298.5h2M32 298.5h3M57 298.5h1M69 298.5h1M78 298.5h1M14 304.5h1M16 304.5h1M19 307.5h2M8 310.5h2M17 316.5h1M23 316.5h9M39 316.5h3M16 319.5h2M27 319.5h10M44 319.5h2M50 319.5h2M16 322.5h2M24 322.5h1M29 322.5h2M16 325.5h2M31 325.5h1M37 325.5h2M16 328.5h2M29 328.5h1M36 328.5h2M16 331.5h2M27 331.5h2M54 331.5h3M16 334.5h2M25 334.5h1M55 334.5h2M14 340.5h1M20 340.5h9M33 340.5h3M18 343.5h1M25 343.5h2M31 343.5h1M40 343.5h2M10 349.5h1M21 349.5h10M32 349.5h9M50 349.5h2M62 349.5h2M76 349.5h2M79 349.5h2M83 349.5h2M21 352.5h1M34 352.5h1M44 352.5h2M56 352.5h3M63 352.5h2M14 355.5h1M23 355.5h1M32 355.5h1M34 355.5h2M45 355.5h1M60 355.5h1M62 355.5h2M69 355.5h2M27 358.5h1M12 361.5h1M8 364.5h1M20 367.5h1M4 370.5h1M28 391.5h3M12 394.5h1M29 394.5h3M11 397.5h2M19 397.5h1M37 397.5h2M22 400.5h2M25 400.5h1M32 403.5h2M46 403.5h1M26 406.5h2M35 406.5h1M52 406.5h2M19 409.5h2M32 409.5h1M18 412.5h2M31 412.5h1M39 412.5h2M25 415.5h2M36 415.5h1M55 415.5h2M21 418.5h2M24 418.5h1M22 421.5h2M29 421.5h1M36 421.5h1M44 421.5h1M8 424.5h2M4 427.5h1M0 430.5h1"/>
<path stroke="#4078f2" stroke-opacity=".62" stroke-width="2" fill="none" d="M20 7.5h10M24 16.5h3M24 25.5h3M24 34.5h3M20 49.5h15M22 52.5h10M18 79.5h9M18 82.5h6M18 85.5h13M18 88.5h11M18 91.5h9M18 94.5h7M18 97.5h20M27 106.5h4M64 115.5h12M46 118.5h10M20 145.5h8M22 148.5h10M18 157.5h9M18 160.5h6M18 163.5h7M18 166.5h20M27 175.5h3M64 184.5h12M46 187.5h10M20 214.5h12M22 217.5h10M18 238.5h9M18 241.5h6M18 244.5h13M18 247.5h11M18 250.5h9M18 253.5h7M27 262.5h4M64 268.5h12M46 271.5h10M20 295.5h12M22 298.5h10M18 319.5h9M18 322.5h6M18 325.5h13M18 328.5h11M18 331.5h9M18 334.5h7M27 343.5h4M64 349.5h12M46 352.5h10M20 391.5h8M13 397.5h6"/>
<path stroke="#e45649" stroke-opacity=".62" stroke-width="2" fill="none" d="M15 10.5h3M18 13.5h8M12 16.5h4M19 16.5h3M23 22.5h8M90 22.5h8M12 25.5h4M19 25.5h3M12 34.5h4M19 34.5h3M15 40.5h4M36 49.5h18M56 49.5h27M85 49.5h9M8 52.5h4M15 52.5h5M8 58.5h5M35 64.5h27M37 67.5h9M8 76.5h8M8 79.5h8M8 82.5h8M25 82.5h4M8 85.5h8M32 85.5h5M8 88.5h8M8 91.5h8M8 94.5h8M8 97.5h8M75 97.5h18M8 103.5h5M8 106.5h9M20 106.5h5M32 106.5h8M8 112.5h11M11 115.5h9M53 115.5h9M12 118.5h8M35 118.5h9M24 121.5h8M37 121.5h8M80 121.5h8M16 124.5h11M30 124.5h8M15 136.5h11M29 145.5h11M8 148.5h4M15 148.5h5M58 148.5h11M8 154.5h8M8 157.5h8M8 160.5h8M25 160.5h4M8 163.5h8M8 166.5h8M75 166.5h18M8 172.5h5M8 175.5h9M20 175.5h5M31 175.5h8M8 181.5h6M11 184.5h9M53 184.5h9M12 187.5h8M35 187.5h9M24 190.5h8M37 190.5h8M82 190.5h8M16 193.5h6M25 193.5h8M15 205.5h6M33 214.5h11M8 217.5h4M15 217.5h5M58 217.5h11M8 223.5h5M8 235.5h8M8 238.5h8M8 241.5h8M25 241.5h4M8 244.5h8M32 244.5h5M8 247.5h8M8 250.5h8M8 253.5h8M8 259.5h5M8 262.5h9M20 262.5h5M32 262.5h8M11 268.5h9M53 268.5h9M12 271.5h8M35 271.5h9M24 274.5h8M37 274.5h8M33 295.5h11M8 298.5h4M15 298.5h5M58 298.5h11M8 304.5h5M8 316.5h8M8 319.5h8M8 322.5h8M25 322.5h4M8 325.5h8M32 325.5h5M8 328.5h8M8 331.5h8M8 334.5h8M8 340.5h5M8 343.5h9M20 343.5h5M32 343.5h8M11 349.5h9M53 349.5h9M12 352.5h8M35 352.5h9M24 355.5h8M37 355.5h8M8 394.5h3M8 397.5h3M29 406.5h6M32 412.5h7M28 415.5h8"/>
<path stroke="#0184bc" stroke-opacity=".62" stroke-width="2" fill="none" d="M11 13.5h6M16 22.5h6M83 22.5h6M26 67.5h10M23 118.5h11M15 121.5h8M73 121.5h6M23 187.5h11M15 190.5h8M73 190.5h8M23 271.5h11M15 274.5h8M23 352.5h11M15 355.5h8M21 412.5h10M25 421.5h4"/>
<path stroke="#50a14f" stroke-opacity=".62" stroke-width="2" fill="none" d="M27 13.5h11M40 13.5h17M28 16.5h25M32 22.5h11M45 22.5h23M99 22.5h11M112 22.5h31M28 25.5h27M28 34.5h24M97 49.5h4M35 52.5h28M12 61.5h9M25 61.5h15M12 64.5h19M12 67.5h10M30 88.5h6M29 91.5h15M45 91.5h9M26 94.5h27M40 97.5h6M50 97.5h15M67 97.5h4M22 112.5h2M46 121.5h14M65 121.5h4M89 121.5h12M39 124.5h12M35 148.5h22M70 148.5h8M26 163.5h20M40 166.5h6M50 166.5h15M67 166.5h4M46 190.5h14M65 190.5h4M91 190.5h7M34 193.5h7M35 217.5h22M70 217.5h9M12 226.5h6M22 226.5h7M30 247.5h6M29 250.5h15M45 250.5h9M26 253.5h29M46 274.5h14M65 274.5h4M35 298.5h22M70 298.5h8M12 307.5h6M22 307.5h6M30 328.5h6M29 331.5h15M45 331.5h9M26 334.5h29M46 355.5h14M65 355.5h4M20 397.5h17M12 400.5h9M12 403.5h19M35 403.5h11M12 406.5h13M36 406.5h16M12 409.5h6M22 409.5h10M12 412.5h5M12 415.5h12M37 415.5h18M12 418.5h8M12 421.5h9M30 421.5h6M38 421.5h6"/>
<path stroke="#986801" stroke-opacity=".62" stroke-width="2" fill="none" d="M63 13.5h5M74 22.5h5M149 22.5h5M46 79.5h4M82 115.5h1M59 118.5h4M106 121.5h1M46 157.5h3M82 184.5h1M59 187.5h4M46 238.5h4M82 268.5h1M59 271.5h4M23 277.5h4M15 286.5h5M46 319.5h4M82 349.5h1M59 352.5h4M23 358.5h4M15 367.5h5"/>
<path stroke="#a0a1a7" stroke-opacity=".62" stroke-width="2" fill="none" d="M4 376.5h3M5 379.5h1M7 379.5h3M11 379.5h8M20 379.5h12M33 379.5h5M39 379.5h4M44 379.5h8M53 379.5h5M5 382.5h1M7 382.5h1M9 382.5h1M11 382.5h8M20 382.5h3M24 382.5h4M29 382.5h8M5 385.5h1M15 385.5h4M5 388.5h2"/>
</svg>
  </div>
 </div>
 <div class="abs dock"><div class="abs" style="left:0;top:-1px">
  <svg class="abs" style="left:11px;top:40.5px" width="14" height="14" viewBox="0 0 14 14"><path d="M1 2.5h1.8M1 7.5h1.8M1 12.5h1.8" stroke="#6b6b6b" stroke-width="1.6"/><path d="M4.6 2.5H13M4.6 7.5H13M4.6 12.5H13" stroke="#858585" stroke-width="1.6"/></svg>
  <div class="dv" style="top:61px"></div>
  <div class="dv" style="top:91px"></div>
  <div class="dv" style="top:336px"></div>
  <svg class="abs" style="left:10px;top:345.5px" width="17" height="16" viewBox="0 0 17 16"><path d="M.8 4.2 3.3 6.6 7.6 1.2" fill="none" stroke="#6e6e6e" stroke-width="1.7"/><path d="M9.2 3.3H16M7.2 8.3H16M7.2 13.3H16" stroke="#858585" stroke-width="1.7"/></svg>
  <div class="dv" style="top:367px"></div>
  <div class="dv" style="top:640px"></div>
  <div class="abs" style="left:10px;top:651px;width:80px;height:112px;background:#fff;border:1px solid #dedede;border-radius:3px"></div>
  <div class="abs" style="left:16.5px;top:657px;font-size:12.2px;color:#8a8a8a;line-height:18px;transform:scaleX(.84);transform-origin:0 0">Co</div>
  <svg class="abs" style="left:15.8px;top:748.4px" width="12.4" height="8" viewBox="0 0 14 9"><circle cx="3.4" cy="2.3" r="2" fill="#b0b0b0"/><path d="M0 8.6c0-3 1.6-3.9 3.4-3.9S6.8 5.6 6.8 8.6z" fill="#b0b0b0"/><path d="M10.3 1.6v6M7.3 4.6h6" stroke="#b0b0b0" stroke-width="1.7"/></svg>
  <div class="abs" style="left:10px;top:773px;width:80px;height:26px;background:#8f9de9;border-radius:3px"></div>
  <div class="dv" style="top:809px"></div>
  <svg class="abs" style="left:10px;top:820px" width="16" height="16" viewBox="0 0 16 16"><rect width="16" height="16" fill="#f0f0f0"/><path fill="#c86dd6" d="M1 1h5.6v2.8H3.8v2.8H1zM9.4 1H15v5.6h-2.8V3.8H9.4zM6.6 3.8h2.8v2.8H6.6zM1 9.4h5.6v2.8H3.8V15H1zM9.4 9.4H15V15h-2.8v-2.8H9.4zM6.6 12.2h2.8V15H6.6z"/></svg>
  <svg class="abs" style="left:10px;top:846px" width="16" height="16" viewBox="0 0 16 16"><rect width="16" height="16" rx="2.5" fill="#fff"/><circle cx="8" cy="8" r="6.3" fill="none" stroke="#2c80b1" stroke-width="1"/><text x="8.2" y="10.1" text-anchor="middle" font-family="Liberation Sans,sans-serif" font-weight="bold" font-size="6" letter-spacing=".35" fill="#2c80b1">MF</text></svg>
  <svg class="abs" style="left:10px;top:872px" width="16" height="16" viewBox="0 0 16 16"><rect width="16" height="16" rx="2.5" fill="#fff"/><circle cx="8" cy="8" r="6.3" fill="none" stroke="#2c80b1" stroke-width="1"/><text x="8.2" y="10.1" text-anchor="middle" font-family="Liberation Sans,sans-serif" font-weight="bold" font-size="6" letter-spacing=".35" fill="#2c80b1">MF</text></svg>
  <svg class="abs" style="left:10px;top:898px" width="16" height="16" viewBox="0 0 16 16"><rect width="16" height="16" rx="2.5" fill="#fff"/><circle cx="8" cy="8" r="6.3" fill="none" stroke="#2c80b1" stroke-width="1"/><text x="8.2" y="10.1" text-anchor="middle" font-family="Liberation Sans,sans-serif" font-weight="bold" font-size="6" letter-spacing=".35" fill="#2c80b1">MF</text></svg>
  <svg class="abs" style="left:10px;top:924px" width="16" height="16" viewBox="0 0 16 16"><rect width="16" height="16" rx="2.5" fill="#fff"/><circle cx="8" cy="8" r="6.3" fill="none" stroke="#2c80b1" stroke-width="1"/><text x="8.2" y="10.1" text-anchor="middle" font-family="Liberation Sans,sans-serif" font-weight="bold" font-size="6" letter-spacing=".35" fill="#2c80b1">MF</text></svg>

 </div></div>
 <div class="abs sb"><span style="left:9px">www/MFSVC/Scanface.php</span><span style="left:183px">24:11</span><span style="left:1485px">LF</span><span style="left:1517px">UTF-8</span></div>
</div>
</body></html>
